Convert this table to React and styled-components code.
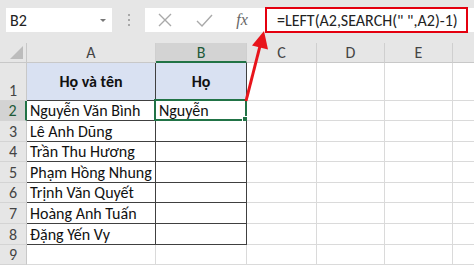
import React from 'react'
import styled, { createGlobalStyle } from 'styled-components'

const GlobalStyle = createGlobalStyle`
  html, body {
    margin: 0;
    padding: 0;
    background: #e6e6e6;
  }
  body {
    font-family: Carlito, Calibri, "Liberation Sans", Arial, sans-serif;
  }
`

// the last column only peeks in at the right edge, so its letter stays off-screen
const COLS = ['A', 'B', 'C', 'D', 'E', '']
const COL_WIDTHS = [27, 129, 91, 70, 68, 68, 68]
const ROW_HEIGHTS = [20, 38, 20, 20.6, 20.6, 20.6, 20.6, 20.6, 20.6, 20.6]

const names = [
  'Nguyễn Văn Bình',
  'Lê Anh Dũng',
  'Trần Thu Hương',
  'Phạm Hồng Nhung',
  'Trịnh Văn Quyết',
  'Hoàng Anh Tuấn',
  'Đặng Yến Vy',
]

const Page = styled.div`
  position: relative;
  width: 474px;
  height: 265px;
  overflow: hidden;
  background: #e6e6e6;
`

const Toolbar = styled.div`
  height: 43px;
  display: flex;
  align-items: center;
  padding: 0 0 3px 6px;
  box-sizing: border-box;
`

const NameBox = styled.div`
  width: 106px;
  height: 24px;
  background: #fff;
  display: flex;
  align-items: center;
  justify-content: space-between;
  padding: 0 6px 0 4px;
  box-sizing: border-box;
  font-size: 16px;
  color: #222;
`

const Caret = styled.span`
  width: 0;
  height: 0;
  border-left: 3px solid transparent;
  border-right: 3px solid transparent;
  border-top: 3px solid #777;
`

const Grip = styled.div`
  width: 33px;
  display: flex;
  flex-direction: column;
  align-items: center;
  gap: 3px;

  span {
    width: 2px;
    height: 2px;
    background: #a8a8a8;
  }
`

const FormulaArea = styled.div`
  flex: 1;
  height: 24px;
  background: #fff;
  display: flex;
  align-items: center;
`

const IconSlot = styled.div`
  width: ${p => p.w}px;
  display: flex;
  justify-content: center;
  align-items: center;
`

const Fx = styled.span`
  font-family: "Liberation Serif", "DejaVu Serif", serif;
  font-style: italic;
  font-size: 16px;
  color: #666;
`

const FormulaInput = styled.div`
  width: 203px;
  height: 26px;
  margin-left: 4px;
  border: 2px solid #e4000f;
  box-sizing: border-box;
  display: flex;
  align-items: center;
  padding-left: 10px;
  font-size: 16px;
  color: #222;
  white-space: pre;
`

const Sheet = styled.div`
  width: ${COL_WIDTHS.reduce((a, b) => a + b, 0)}px;
  display: grid;
  grid-template-columns: ${COL_WIDTHS.map(w => w + 'px').join(' ')};
  grid-template-rows: ${ROW_HEIGHTS.map(h => h + 'px').join(' ')};
  background: #fff;
`

const Corner = styled.div`
  background: #e6e6e6;
  border-right: 1px solid #c8c8c8;
  border-bottom: 1px solid #c8c8c8;
  position: relative;

  &::after {
    content: '';
    position: absolute;
    right: 3px;
    bottom: 3px;
    border-left: 13px solid transparent;
    border-bottom: 13px solid #bcbcbc;
  }
`

const ColHead = styled.div`
  background: ${p => (p.active ? '#d3d3d3' : '#e6e6e6')};
  border-right: 1px solid #cfcfcf;
  border-bottom: ${p => (p.active ? '2px solid #217346' : '1px solid #c8c8c8')};
  display: flex;
  align-items: center;
  justify-content: center;
  font-size: 16px;
  color: ${p => (p.active ? '#1e5a38' : '#444')};
`

const RowHead = styled.div`
  background: ${p => (p.active ? '#d3d3d3' : '#e6e6e6')};
  border-right: ${p => (p.active ? '2px solid #217346' : '1px solid #c8c8c8')};
  border-bottom: 1px solid #d4d4d4;
  display: flex;
  align-items: flex-end;
  justify-content: center;
  font-size: 16px;
  line-height: 19px;
  color: ${p => (p.active ? '#1e5a38' : '#444')};
`

const Cell = styled.div`
  position: relative;
  border-right: 1px solid ${p => (p.boxed ? '#404040' : '#dadada')};
  border-bottom: 1px solid ${p => (p.boxed ? '#404040' : '#dadada')};
  background: ${p => (p.head ? '#d9e1f2' : '#fff')};
  display: flex;
  align-items: ${p => (p.head ? 'center' : 'flex-end')};
  justify-content: ${p => (p.head ? 'center' : 'flex-start')};
  padding: 0 3px;
  font-size: 16px;
  line-height: 19px;
  font-weight: ${p => (p.head ? 700 : 400)};
  color: #111;
  white-space: nowrap;
`

const Selection = styled.div`
  position: absolute;
  left: -2px;
  top: -2px;
  right: -1px;
  bottom: -1px;
  border: 2px solid #217346;
  pointer-events: none;

  &::after {
    content: '';
    position: absolute;
    right: -4px;
    bottom: -4px;
    width: 5px;
    height: 5px;
    background: #217346;
    border: 1px solid #fff;
  }
`

const Overlay = styled.svg`
  position: absolute;
  left: 0;
  top: 0;
  pointer-events: none;
`

function XIcon() {
  return (
    <svg width="14" height="14" viewBox="0 0 14 14">
      <path d="M1 1 L13 13 M13 1 L1 13" stroke="#a9a9a9" strokeWidth="1.4" fill="none" />
    </svg>
  )
}

function CheckIcon() {
  return (
    <svg width="17" height="13" viewBox="0 0 17 13">
      <path d="M1 7 L6 12 L16 1" stroke="#a9a9a9" strokeWidth="1.4" fill="none" />
    </svg>
  )
}

function cellContent(row, col) {
  if (row === 1 && col === 0) return 'Họ và tên'
  if (row === 1 && col === 1) return 'Họ'
  if (row >= 2 && row <= 8 && col === 0) return names[row - 2]
  if (row === 2 && col === 1) return 'Nguyễn'
  return ''
}

export default function App() {
  const rows = []
  for (let r = 1; r <= 9; r++) {
    rows.push(
      <RowHead key={'h' + r} active={r === 2}>{r}</RowHead>
    )
    COLS.forEach((c, ci) => {
      const boxed = ci < 2 && r <= 8
      rows.push(
        <Cell key={ci + '-' + r} boxed={boxed} head={r === 1 && ci < 2}>
          {cellContent(r, ci)}
          {r === 2 && ci === 1 && <Selection />}
        </Cell>
      )
    })
  }

  return (
    <Page>
      <GlobalStyle />
      <Toolbar>
        <NameBox>
          B2
          <Caret />
        </NameBox>
        <Grip>
          <span />
          <span />
          <span />
        </Grip>
        <FormulaArea>
          <IconSlot w={40}><XIcon /></IconSlot>
          <IconSlot w={38}><CheckIcon /></IconSlot>
          <IconSlot w={38}><Fx>fx</Fx></IconSlot>
          <FormulaInput>{'=LEFT(A2,SEARCH(" ",A2)-1)'}</FormulaInput>
        </FormulaArea>
      </Toolbar>
      <Sheet>
        <Corner />
        {COLS.map((c, ci) => (
          <ColHead key={ci} active={c === 'B'}>{c}</ColHead>
        ))}
        {rows}
      </Sheet>
      <Overlay width="474" height="265" viewBox="0 0 474 265">
        <line x1="246" y1="101" x2="260" y2="46" stroke="#e8141b" strokeWidth="3" />
        <polygon points="264,31 252,45.5 268,49.5" fill="#e8141b" />
      </Overlay>
    </Page>
  )
}
